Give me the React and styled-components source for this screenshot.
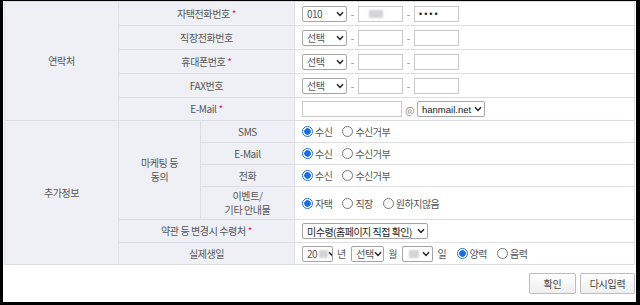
import React from "react";
import styled, { createGlobalStyle } from "styled-components";

const GlobalStyle = createGlobalStyle`
  html, body {
    margin: 0;
    padding: 0;
    background: #fff;
  }
  body {
    font-family: "Noto Sans CJK KR", "Noto Sans", "Liberation Sans", sans-serif;
    font-size: 10px;
    color: #555;
  }
`;

const Frame = styled.div`
  width: 640px;
  height: 305px;
  box-sizing: border-box;
  border-style: solid;
  border-color: #000;
  border-width: 1px 4px 3px 3px;
  padding: 0 1px;
  background: #fff;
`;

const Table = styled.table`
  width: 631px;
  border-collapse: collapse;
  table-layout: fixed;
  border: 1px solid #c3c0dd;
`;

const Th = styled.th`
  background: #eff0f5;
  font-weight: normal;
  text-align: center;
  color: #555;
  letter-spacing: -0.4px;
  line-height: 14px;
  border: 1px solid #dcdde5;
  padding: 0;
  height: ${(p) => p.$h || 22}px;
`;

const Td = styled.td`
  background: #fff;
  border: 1px solid #dcdde5;
  padding: 0 0 0 7px;
  height: ${(p) => p.$h || 22}px;
`;

const Req = styled.span`
  color: #e5187e;
  margin-left: 2px;
`;

const Line = styled.div`
  display: flex;
  align-items: center;
  gap: ${(p) => p.$gap ?? 3}px;
`;

const SelectBox = styled.div`
  box-sizing: border-box;
  width: ${(p) => p.$w}px;
  height: 16px;
  border: 1px solid #a5a5a5;
  border-radius: 2px;
  background: #fff;
  display: flex;
  align-items: center;
  padding: 0 2px 0 4px;
  color: ${(p) => (p.$dark ? "#222" : "#555")};
  font-family: ${(p) => (p.$latin ? '"Liberation Sans", Arial, sans-serif' : "inherit")};
  font-size: ${(p) => (p.$latin ? 9.5 : 10)}px;
  letter-spacing: ${(p) => (p.$latin ? 0 : -0.5)}px;
  white-space: nowrap;
  overflow: hidden;
`;

const SelText = styled.span`
  flex: ${(p) => (p.$grow ? 1 : "none")};
  display: flex;
  align-items: center;
`;

const Chevron = () => (
  <svg width="8" height="6" viewBox="0 0 8 6" style={{ flex: "none" }}>
    <path d="M1 1.2 L4 4.4 L7 1.2" fill="none" stroke="#222" strokeWidth="1.5" />
  </svg>
);

const Select = ({ w, children, grow = true, ...rest }) => (
  <SelectBox $w={w} {...rest}>
    <SelText $grow={grow}>{children}</SelText>
    <Chevron />
  </SelectBox>
);

const InputBox = styled.div`
  box-sizing: border-box;
  width: ${(p) => p.$w}px;
  height: 16px;
  border: 1px solid #c9c9c9;
  background: #fff;
  display: flex;
  align-items: center;
  padding-left: 4px;
  color: #222;
  font-family: "Liberation Sans", Arial, sans-serif;
  font-size: 9px;
  letter-spacing: 2px;
`;

const Blur = styled.span`
  display: inline-block;
  width: ${(p) => p.$w}px;
  height: 8px;
  background: #d4d4d8;
  filter: blur(1px);
  margin-left: ${(p) => p.$ml || 0}px;
`;

const Dash = styled.span`
  color: #888;
  width: 5px;
  text-align: center;
`;

const Unit = styled.span`
  color: #555;
  margin: 0 5px 0 4px;
`;

const RadioItem = styled.label`
  display: inline-flex;
  align-items: center;
  gap: 2px;
  color: #555;
  letter-spacing: -0.5px;
  margin-right: ${(p) => p.$mr ?? 10}px;
`;

const Dot = styled.span`
  box-sizing: border-box;
  width: 11px;
  height: 11px;
  border-radius: 50%;
  border: 1px solid ${(p) => (p.$on ? "#1a6fe0" : "#777")};
  background: ${(p) => (p.$on ? "radial-gradient(circle, #1a6fe0 0 3px, #fff 3.5px)" : "#fff")};
`;

const Radio = ({ on, children, mr }) => (
  <RadioItem $mr={mr}>
    <Dot $on={on} />
    {children}
  </RadioItem>
);

const Buttons = styled.div`
  display: flex;
  justify-content: flex-end;
  gap: 4px;
  padding-top: 8px;
`;

const Button = styled.button`
  box-sizing: border-box;
  width: ${(p) => p.$w}px;
  height: 21px;
  border: 1px solid #bdbdbd;
  border-radius: 2px;
  background: linear-gradient(#ffffff, #eeeeee);
  font-family: inherit;
  font-size: 10px;
  color: #444;
  letter-spacing: -0.3px;
  padding: 0;
`;

const Consent = ({ label, h }) => (
  <tr>
    <Th $h={h}>{label}</Th>
    <Td $h={h}>
      <Line $gap={0}>
        <Radio on>수신</Radio>
        <Radio>수신거부</Radio>
      </Line>
    </Td>
  </tr>
);

export default function App() {
  return (
    <>
      <GlobalStyle />
      <Frame>
        <Table>
          <colgroup>
            <col style={{ width: 114 }} />
            <col style={{ width: 82 }} />
            <col style={{ width: 94 }} />
            <col />
          </colgroup>
          <tbody>
            <tr>
              <Th rowSpan={5}>연락처</Th>
              <Th colSpan={2} $h={23}>
                자택전화번호<Req>*</Req>
              </Th>
              <Td $h={23}>
                <Line>
                  <Select w={45}>010</Select>
                  <Dash>-</Dash>
                  <InputBox $w={45}>
                    <Blur $w={14} $ml={6} />
                  </InputBox>
                  <Dash>-</Dash>
                  <InputBox $w={45}>••••</InputBox>
                </Line>
              </Td>
            </tr>
            {["직장전화번호", "휴대폰번호", "FAX번호"].map((t, i) => (
              <tr key={t}>
                <Th colSpan={2} $h={23}>
                  {t}
                  {i === 1 && <Req>*</Req>}
                </Th>
                <Td $h={23}>
                  <Line>
                    <Select w={45}>선택</Select>
                    <Dash>-</Dash>
                    <InputBox $w={45} />
                    <Dash>-</Dash>
                    <InputBox $w={45} />
                  </Line>
                </Td>
              </tr>
            ))}
            <tr>
              <Th colSpan={2} $h={22}>
                E-Mail<Req>*</Req>
              </Th>
              <Td $h={22}>
                <Line $gap={3}>
                  <InputBox $w={100} />
                  <Dash style={{ width: 9 }}>@</Dash>
                  <Select w={68} $latin $dark>
                    hanmail.net
                  </Select>
                </Line>
              </Td>
            </tr>
            <tr>
              <Th rowSpan={6}>추가정보</Th>
              <Th rowSpan={4}>
                마케팅 등<br />
                동의
              </Th>
              <Th $h={21}>SMS</Th>
              <Td $h={21}>
                <Line $gap={0}>
                  <Radio on>수신</Radio>
                  <Radio>수신거부</Radio>
                </Line>
              </Td>
            </tr>
            <Consent label="E-Mail" h={21} />
            <Consent label="전화" h={21} />
            <tr>
              <Th $h={32}>
                이벤트/
                <br />
                기타 안내물
              </Th>
              <Td $h={32}>
                <Line $gap={0}>
                  <Radio on>자택</Radio>
                  <Radio>직장</Radio>
                  <Radio>원하지않음</Radio>
                </Line>
              </Td>
            </tr>
            <tr>
              <Th colSpan={2} $h={22}>
                약관 등 변경시 수령처<Req>*</Req>
              </Th>
              <Td $h={22}>
                <Line>
                  <Select w={126} $dark>
                    미수령(홈페이지 직접 확인)
                  </Select>
                </Line>
              </Td>
            </tr>
            <tr>
              <Th colSpan={2} $h={21}>
                실제생일
              </Th>
              <Td $h={21}>
                <Line $gap={0}>
                  <Select w={31} grow={false}>
                    20
                    <Blur $w={9} $ml={2} />
                  </Select>
                  <Unit>년</Unit>
                  <Select w={33} grow={false}>
                    선택
                  </Select>
                  <Unit>월</Unit>
                  <Select w={31}>
                    <Blur $w={10} $ml={2} />
                  </Select>
                  <Unit style={{ marginRight: 10 }}>일</Unit>
                  <Radio on>양력</Radio>
                  <Radio>음력</Radio>
                </Line>
              </Td>
            </tr>
          </tbody>
        </Table>
        <Buttons>
          <Button $w={47}>확인</Button>
          <Button $w={55}>다시입력</Button>
        </Buttons>
      </Frame>
    </>
  );
}
